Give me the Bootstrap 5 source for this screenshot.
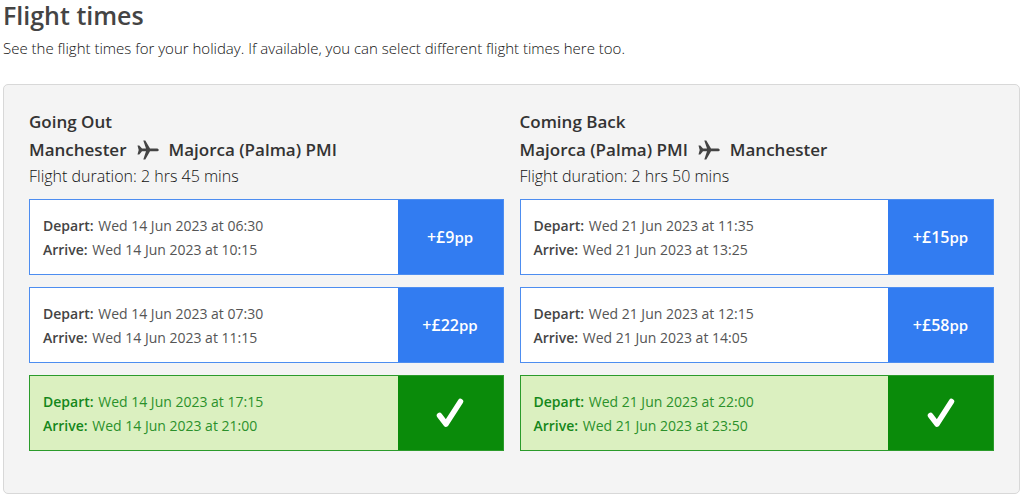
<!DOCTYPE html>
<html lang="en">
<head>
<meta charset="utf-8">
<meta name="viewport" content="width=device-width, initial-scale=1">
<title>Flight times</title>
<link href="https://cdn.jsdelivr.net/npm/bootstrap@5.3.0/dist/css/bootstrap.min.css" rel="stylesheet">
<style>
  body { font-family: "Open Sans", sans-serif; font-size: 15px; font-weight: 300; line-height: 24px; color: #111; background: #fff; }
  .page { padding: 0 4px 3px 3px; }
  .page-title { font-size: 25px; line-height: 30px; font-weight: 600; color: #444; }
  .intro { margin: 6px 0 24px; }
  .panel { background: #f4f4f4; border: 1px solid #d8d8d8; border-radius: 5px; padding: 23px 25px 42px; }
  .leg-title, .route { font-size: 17px; line-height: 28px; font-weight: 600; color: #333; }
  .route { gap: 10px; }
  .duration { font-size: 16px; margin-bottom: 11px; }
  .options { gap: 12px; }
  .flight { background: #fff; border: 1px solid #4d8df0; min-height: 76px; }
  .times { padding: 2px 13px 0; font-size: 14px; font-weight: 400; color: #555; }
  .times strong { font-size: 14px; font-weight: 600; color: #444; margin-right: 1px; }
  .pick { width: 105px; border: 0; background: #327cf1; color: #fff; font-size: 16px; font-weight: 600; padding: 0; }
  .pick small { font-size: 15px; font-weight: 600; }
  .flight.chosen { background: #dbf0c0; border-color: #2b9b2b; }
  .chosen .times { color: #2b902b; }
  .chosen .times strong { color: #14871a; }
  .chosen .pick { background: #0a8b0a; }
</style>
</head>
<body>
<svg class="d-none" aria-hidden="true">
  <symbol id="plane" viewBox="0 0 22 20"><path fill="#444" d="M.5 5.4h1.8L5 8.500h4L6.300.5h2L13 8.500h6.500c1.300 0 2.300.700 2.300 1.400s-1 1.400-2.300 1.400H13l-4.700 8.200h-2L9 11.300H5l-2.700 3.100H.5l1.200-4.500z"/></symbol>
  <symbol id="tick" viewBox="0 0 28 30"><path d="M3.500 17.500 10 26 24.500 3.500" fill="none" stroke="#fff" stroke-width="5.500" stroke-linecap="round" stroke-linejoin="round"/></symbol>
</svg>
<main class="page">
  <h1 class="page-title mb-0">Flight times</h1>
  <p class="intro">See the flight times for your holiday. If available, you can select different flight times here too.</p>
  <div class="panel">
    <div class="row gx-3">
      <section class="col-6">
        <h2 class="leg-title mb-0">Going Out</h2>
        <div class="route d-flex align-items-center">Manchester <svg width="22" height="20" role="img" aria-label="to"><use href="#plane"/></svg> Majorca (Palma) PMI</div>
        <div class="duration">Flight duration: 2 hrs 45 mins</div>
        <div class="options d-flex flex-column">
          <div class="flight d-flex">
            <div class="times flex-grow-1 align-self-center"><div><strong>Depart:</strong> Wed 14 Jun 2023 at 06:30</div><div><strong>Arrive:</strong> Wed 14 Jun 2023 at 10:15</div></div>
            <button type="button" class="pick">+£9<small>pp</small></button>
          </div>
          <div class="flight d-flex">
            <div class="times flex-grow-1 align-self-center"><div><strong>Depart:</strong> Wed 14 Jun 2023 at 07:30</div><div><strong>Arrive:</strong> Wed 14 Jun 2023 at 11:15</div></div>
            <button type="button" class="pick">+£22<small>pp</small></button>
          </div>
          <div class="flight chosen d-flex">
            <div class="times flex-grow-1 align-self-center"><div><strong>Depart:</strong> Wed 14 Jun 2023 at 17:15</div><div><strong>Arrive:</strong> Wed 14 Jun 2023 at 21:00</div></div>
            <button type="button" class="pick" aria-label="Selected" aria-pressed="true"><svg width="28" height="30" aria-hidden="true"><use href="#tick"/></svg></button>
          </div>
        </div>
      </section>
      <section class="col-6">
        <h2 class="leg-title mb-0">Coming Back</h2>
        <div class="route d-flex align-items-center">Majorca (Palma) PMI <svg width="22" height="20" role="img" aria-label="to"><use href="#plane"/></svg> Manchester</div>
        <div class="duration">Flight duration: 2 hrs 50 mins</div>
        <div class="options d-flex flex-column">
          <div class="flight d-flex">
            <div class="times flex-grow-1 align-self-center"><div><strong>Depart:</strong> Wed 21 Jun 2023 at 11:35</div><div><strong>Arrive:</strong> Wed 21 Jun 2023 at 13:25</div></div>
            <button type="button" class="pick">+£15<small>pp</small></button>
          </div>
          <div class="flight d-flex">
            <div class="times flex-grow-1 align-self-center"><div><strong>Depart:</strong> Wed 21 Jun 2023 at 12:15</div><div><strong>Arrive:</strong> Wed 21 Jun 2023 at 14:05</div></div>
            <button type="button" class="pick">+£58<small>pp</small></button>
          </div>
          <div class="flight chosen d-flex">
            <div class="times flex-grow-1 align-self-center"><div><strong>Depart:</strong> Wed 21 Jun 2023 at 22:00</div><div><strong>Arrive:</strong> Wed 21 Jun 2023 at 23:50</div></div>
            <button type="button" class="pick" aria-label="Selected" aria-pressed="true"><svg width="28" height="30" aria-hidden="true"><use href="#tick"/></svg></button>
          </div>
        </div>
      </section>
    </div>
  </div>
</main>
<script src="https://cdn.jsdelivr.net/npm/bootstrap@5.3.0/dist/js/bootstrap.bundle.min.js"></script>
</body>
</html>
